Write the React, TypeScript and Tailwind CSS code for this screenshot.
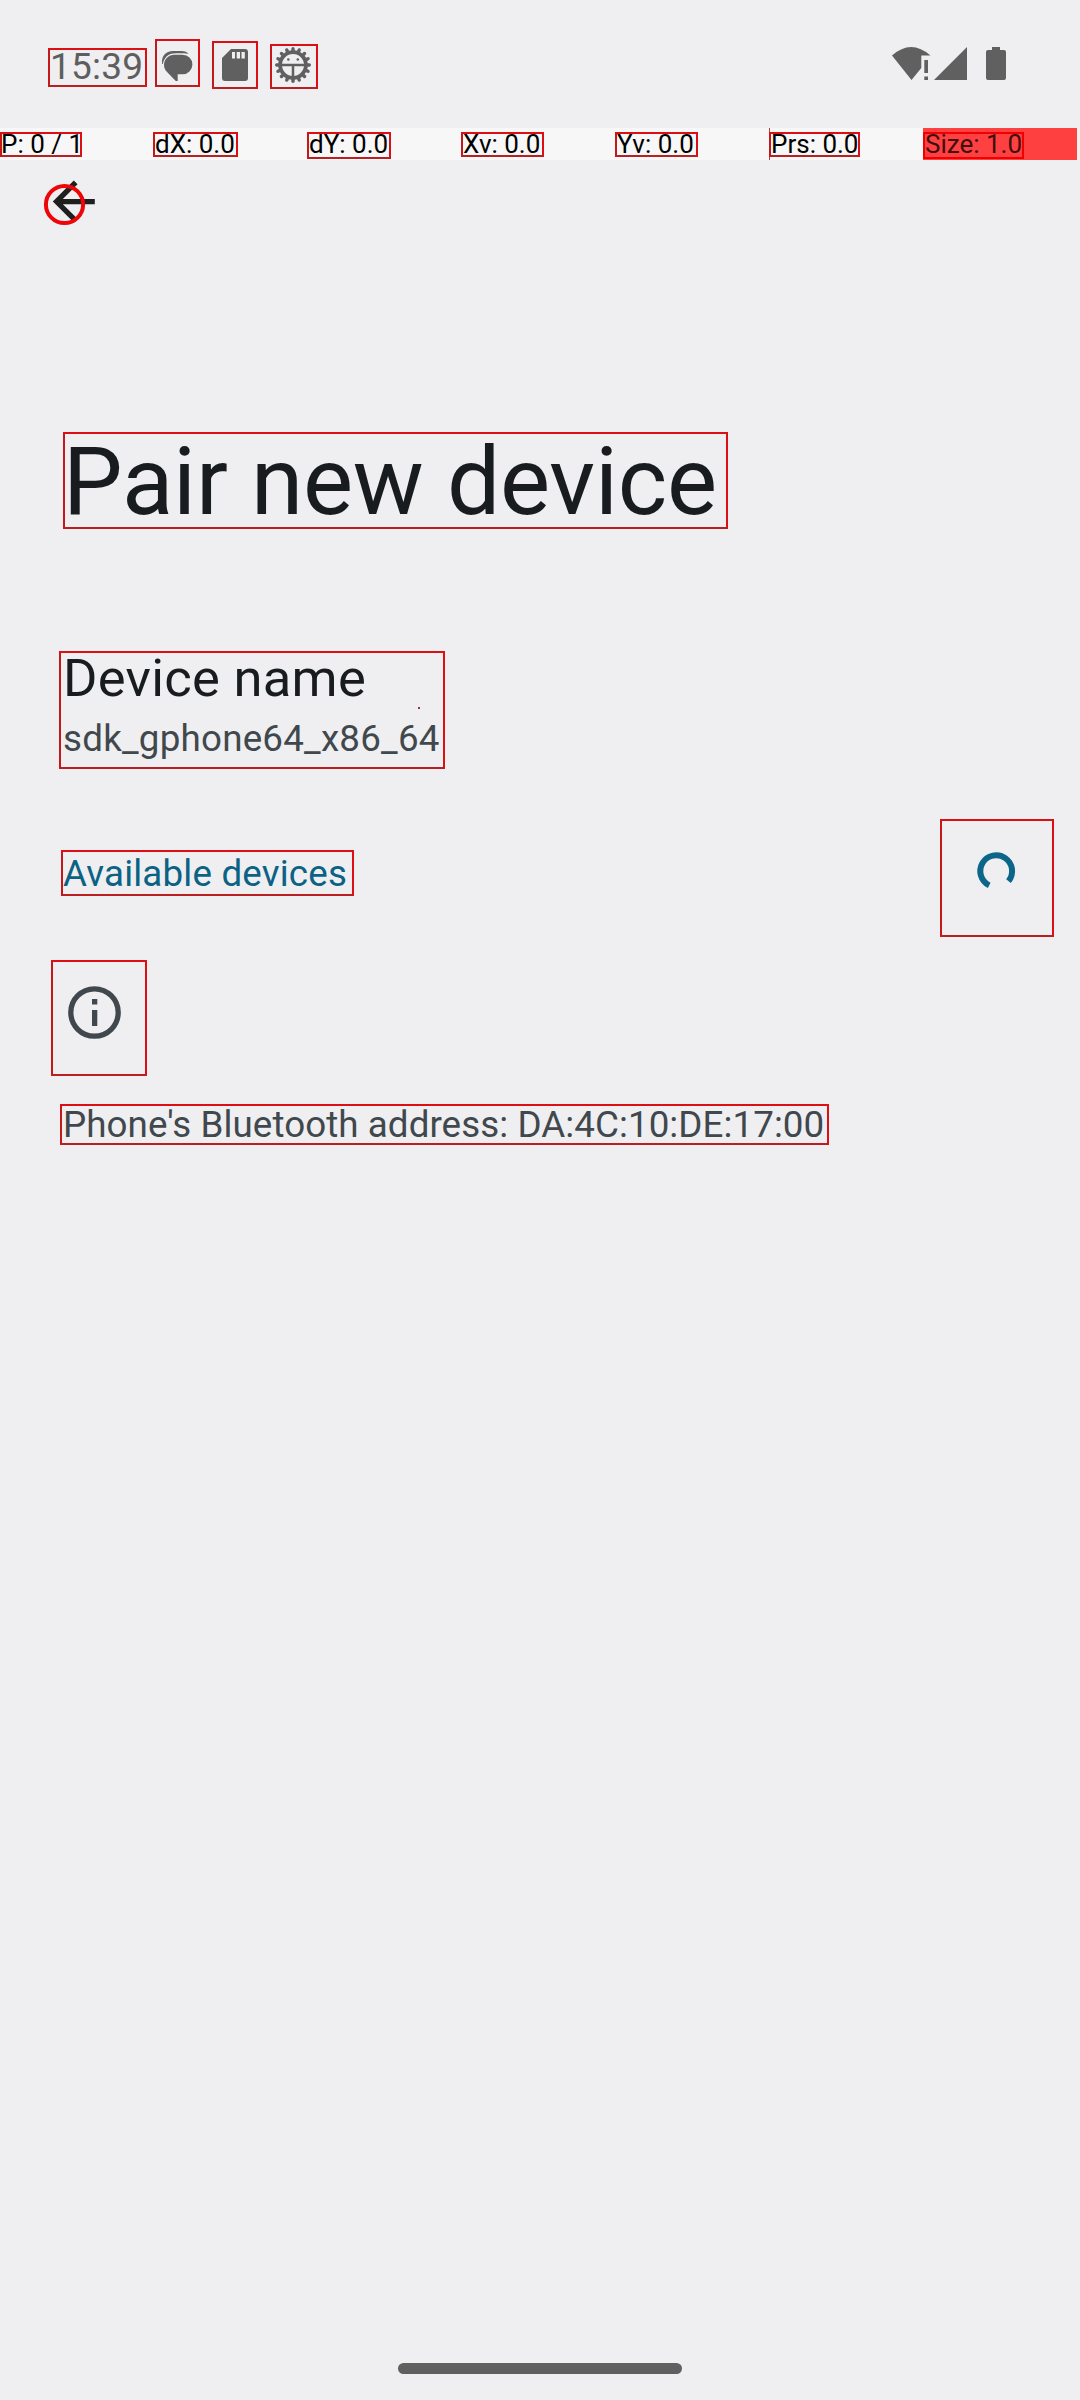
import React from "react";

const box = "border-2 border-t-[#dc1014] border-r-[#dc1014] border-b-[#b92022] border-l-[#c4181b] whitespace-nowrap";

const teeth = Array.from({ length: 16 }, (_, i) => i * 22.5);

function StatusBar() {
  return (
    <header className="flex h-32 items-start text-[#5e5e5e]">
      <div className={`${box} ml-12 mt-12 h-[39px] w-[99px] text-[37px] leading-[34px] tracking-[0.25px]`}>15:39</div>
      <div className={`${box} ml-2 mt-[39px] h-12 w-[45px]`}>
        <svg viewBox="157 41 41 44" className="block h-full w-full" fill="#606060">
          <path d="M174.500 54.700H182.500A9.900 9.800 0 0 1 182.500 74.300H177.700V81H175.800L167.500 72.500C165 70 164 67.500 164 65C164 59 168.500 54.700 174.500 54.700Z" />
          <path d="M162.200 64C161 56 166 51 173 51H181C185 51 187.500 52.300 188.300 54C184 53.100 178 53.300 173.500 53.500C167.500 54 164 58 162.900 64Z" />
        </svg>
      </div>
      <div className={`${box} ml-3 mt-[41px] h-12 w-[46px]`}>
        <svg viewBox="214 43 42 44" className="block h-full w-full">
          <path fill="#606060" d="M231 49H245Q248 49 248 52V78Q248 81 245 81H225Q222 81 222 78V58Z" />
          <path fill="#efeff1" d="M232 52h3v6.500h-3zM236.700 52h3.300v6.500h-3.300zM241.500 52h3.300v6.500h-3.300z" />
        </svg>
      </div>
      <div className={`${box} ml-3 mt-11 h-[45px] w-12`}>
        <svg viewBox="272 46 44 41" className="block h-full w-full" fill="none" stroke="#606060">
          <circle cx="293" cy="65" r="12.900" strokeWidth="3.800" />
          {teeth.map((a) => (
            <path key={a} d="M293 51V48.700" strokeWidth="3.400" strokeLinecap="round" transform={`rotate(${a} 293 65)`} />
          ))}
          <path d="M281 65H305M293 65V78" strokeWidth="2.500" />
          <circle cx="288.300" cy="59.500" r="1.300" fill="#606060" stroke="none" />
          <circle cx="297.800" cy="59.500" r="1.300" fill="#606060" stroke="none" />
        </svg>
      </div>
      <svg viewBox="890 44 120 38" className="ml-auto mr-[70px] mt-11 h-[38px] w-[120px]" fill="#606060">
        <path d="M892 55.500Q911 38.500 930.500 55.500H921.300V68L911.500 80Z" />
        <path d="M924.300 60h3.700v13h-3.700zM924.300 76.500h3.700v3.500h-3.700z" />
        <path d="M934 80L967 47V80Z" />
        <path d="M992 47h8v3h4q2 0 2 2v26q0 2-2 2h-16q-2 0-2-2V52q0-2 2-2h4z" />
      </svg>
    </header>
  );
}

const readings = [
  { text: "P: 0 / 1", cell: "bg-[#f7f7f7]", cls: "w-[82px] h-[25px] -indent-px" },
  { text: "dX: 0.0", cell: "bg-[#f7f7f7]", cls: "w-[85px] h-[25px]" },
  { text: "dY: 0.0", cell: "bg-[#f7f7f7]", cls: "w-[84px] h-[27px]" },
  { text: "Xv: 0.0", cell: "bg-[#f7f7f7]", cls: "w-[83px] h-[25px]" },
  { text: "Yv: 0.0", cell: "bg-[#f7f7f7]", cls: "w-[83px] h-[25px]" },
  { text: "Prs: 0.0", cell: "bg-[#f7f7f7] shadow-[inset_1px_0_#c03a3e]", cls: "w-[91px] h-[25px]" },
  { text: "Size: 1.0", cell: "bg-[#ff4040]", cls: "w-[101px] h-[27px] border-[#f00000]! text-[#400f0f]" },
];

function PointerBar() {
  return (
    <div className="grid h-8 w-[1077px] grid-cols-[153px_repeat(6,154px)] text-[26px] leading-[20px] text-black">
      {readings.map((r) => (
        <div key={r.text} className={`${r.cell} pt-1`}>
          <div className={`${box} ${r.cls}`}>{r.text}</div>
        </div>
      ))}
    </div>
  );
}

export default function App() {
  return (
    <div className="flex h-[2400px] w-[1080px] flex-col overflow-hidden bg-[#efeff1] font-['Roboto',sans-serif]">
      <StatusBar />
      <PointerBar />
      <svg viewBox="42 170 63 63" className="ml-[42px] mt-[10px] h-[63px] w-[63px] shrink-0">
        <path transform="translate(42.300 170) scale(2.625)" fill="#1f1f1f" d="M20 11H7.830l5.590-5.590L12 4l-8 8 8 8 1.410-1.410L7.830 13H20v-2z" />
        <circle cx="64.500" cy="204.500" r="18.600" fill="none" stroke="#ee0508" strokeWidth="4" />
      </svg>
      <main className="flex flex-col items-start text-[#41484d]">
        <h1 className={`${box} ml-[63px] mt-[199px] h-[97px] w-[665px] text-[94.5px] leading-[95px] tracking-[-0.2px] text-[#191c1e]`}>
          <span className="-ml-0.5">Pair new device</span>
        </h1>
        <section className={`${box} relative ml-[59px] mt-[122px] h-[118px] w-[386px] pl-0.5`}>
          <div className="text-[52.5px] leading-[50px] tracking-[0.28px] text-[#191c1e]">Device name</div>
          <div className="mt-[14px] text-[36.75px] leading-[44px] tracking-[0.22px]">sdk_gphone64_x86_64</div>
          <span className="absolute left-[357px] top-[54px] size-0.5 bg-[#a83038]" />
        </section>
        <div className="mt-[50px] flex w-full items-start pl-[61px] pr-[26px]">
          <h2 className={`${box} mt-[31px] h-[46px] w-[293px] text-[36.75px] leading-[44px] tracking-[0.18px] text-[#0b6284]`}>Available devices</h2>
          <div className={`${box} ml-auto h-[118px] w-[114px]`}>
            <svg viewBox="942 821 110 114" className="block h-full w-full">
              <path d="M989.200 885.400A15.900 15.900 0 1 1 1008.500 881.200" fill="none" stroke="#0b668a" strokeWidth="6" />
            </svg>
          </div>
        </div>
        <div className={`${box} ml-[51px] mt-[23px] h-[116px] w-24`}>
          <svg viewBox="53 962 92 112" className="block h-full w-full" fill="#41484d">
            <circle cx="94.500" cy="1012.500" r="23.700" fill="none" stroke="#41484d" strokeWidth="5.300" />
            <path d="M92 999h5.300v5.500h-5.300zM92 1010h5.300v16h-5.300z" />
          </svg>
        </div>
        <p className={`${box} ml-[60px] mt-7 h-[41px] w-[769px] pl-px text-[36.75px] leading-[37px] tracking-[0.07px]`}>Phone's Bluetooth address: DA:4C:10:DE:17:00</p>
      </main>
      <div className="mx-auto mb-[26px] mt-auto h-[11px] w-[284px] rounded-full bg-[#606060]" />
    </div>
  );
}
